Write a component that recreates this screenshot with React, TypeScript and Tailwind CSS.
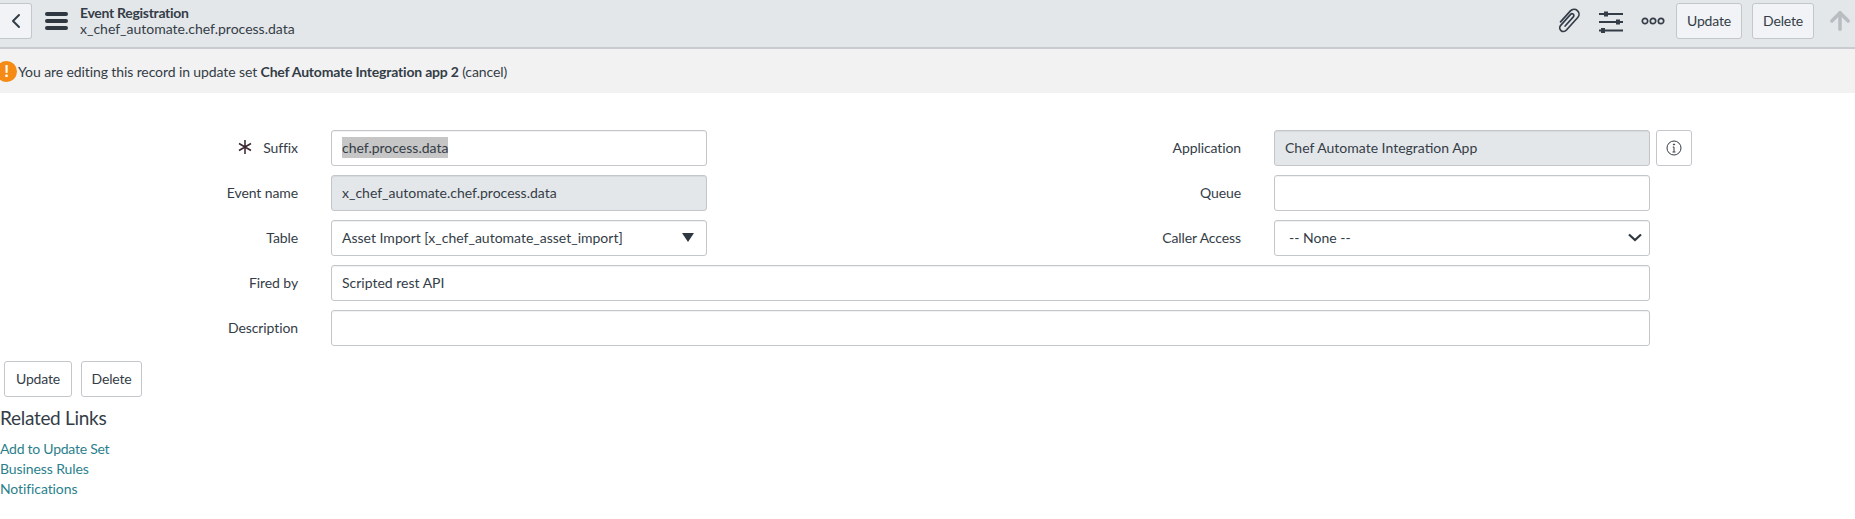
import { ReactNode } from 'react';
import { ArrowUp, ChevronLeft } from 'lucide-react';

const inputBase =
  'flex h-9 items-center rounded-[3px] border border-[#c4c7ca] px-[10px] pb-[2px] text-[14px] tracking-normal text-[#343d47] shadow-[inset_0_1px_1px_rgba(0,0,0,0.06)]';

function Field({ label, required, children }: { label: string; required?: boolean; children: ReactNode }) {
  return (
    <>
      <div className="flex h-9 items-center justify-end gap-[10px] pb-[2px] text-[14px] tracking-[-0.1px] text-[#343d47]">
        {required && (
          <svg width="16" height="16" viewBox="0 0 16 16" stroke="#3a2630" strokeWidth="1.5">
            <path d="M8 1v14M2 4.5l12 7M14 4.5l-12 7" />
          </svg>
        )}
        <span>{label}</span>
      </div>
      {children}
    </>
  );
}

function Btn({ children, className }: { children: ReactNode; className: string }) {
  return (
    <button className={`flex h-9 items-center justify-center rounded-[3px] border border-[#c4c7ca] pb-[1px] text-[14px] tracking-[-0.2px] text-[#343d47] ${className}`}>
      {children}
    </button>
  );
}

export default function App() {
  return (
    <div className="h-[519px] w-[1855px] overflow-hidden bg-white font-['Lato',sans-serif]">
      <header className="flex h-[49px] items-center border-b-2 border-[#c9cbce] bg-[#e4e7ea] pb-[5px]">
        <button className="flex h-[36px] w-[32px] items-center justify-center rounded-r-[3px] border border-l-0 border-[#c4c7ca] bg-[#f1f3f6] text-[#343d47]">
          <ChevronLeft size={24} strokeWidth={2} />
        </button>
        <div className="ml-[13px] flex w-[23px] flex-col gap-[3px]">
          <span className="h-[4px] rounded-sm bg-[#2f3740]" />
          <span className="h-[4px] rounded-sm bg-[#2f3740]" />
          <span className="h-[4px] rounded-sm bg-[#2f3740]" />
        </div>
        <div className="ml-[12px] text-[14px] leading-[16px] text-[#343d47]">
          <div className="font-bold tracking-[-0.3px]">Event Registration</div>
          <div>x_chef_automate.chef.process.data</div>
        </div>
        <div className="ml-auto flex items-center">
          <svg width="32" height="32" viewBox="0 0 26 26" fill="none" stroke="#343d47" strokeWidth="1.4" strokeLinecap="round">
            <path transform="rotate(42 12 13)" d="M7.5 18V6a4 4 0 0 1 8 0V20a3 3 0 0 1-6 0V8a1.5 1.5 0 0 1 3 0V18" />
          </svg>
          <svg className="ml-[13px]" width="24" height="24" viewBox="0 0 24 24" stroke="#343d47" fill="#343d47">
            <path d="M0 5h24M0 13h24M0 21.5h24" strokeWidth="1.8" />
            <rect x="5" y="2.5" width="4" height="5" stroke="none" />
            <rect x="17" y="10.5" width="4" height="5" stroke="none" />
            <rect x="2" y="19" width="4" height="5" stroke="none" />
          </svg>
          <svg className="ml-[18px]" width="24" height="8" viewBox="0 0 24 8" fill="none" stroke="#343d47" strokeWidth="1.7">
            <circle cx="4" cy="4" r="2.7" />
            <circle cx="12" cy="4" r="2.7" />
            <circle cx="20" cy="4" r="2.7" />
          </svg>
          <Btn className="ml-[11px] w-[66px] bg-[#f1f3f6]">Update</Btn>
          <Btn className="ml-[10px] w-[62px] bg-[#f1f3f6]">Delete</Btn>
          <ArrowUp className="ml-[12px] mr-[1px] text-[#b9bcc0]" size={28} strokeWidth={3} />
        </div>
      </header>

      <div className="flex h-[44px] items-center bg-[#f2f2f2] text-[14px] tracking-[-0.1px] text-[#343d47]">
        <span className="ml-[-4px] flex h-[21px] w-[21px] items-center justify-center rounded-full bg-[#f58a14] text-[17px] font-bold text-white">
          !
        </span>
        <span className="ml-[1px]">
          You are editing this record in update set <b className="font-bold tracking-[-0.2px]">Chef Automate Integration app 2</b> (cancel)
        </span>
      </div>

      <form className="mt-[37px] grid grid-cols-[298px_409px_534px_409px_43px] gap-y-[9px]">
        <Field label="Suffix" required>
          <div className={`${inputBase} ml-[33px]`}>
            <span className="bg-[#c6c6c6]">chef.process.data</span>
          </div>
        </Field>
        <Field label="Application">
          <div className={`${inputBase} ml-[33px] bg-[#e4e7ea]`}>Chef Automate Integration App</div>
        </Field>
        <button
          type="button"
          className="ml-[6px] flex h-9 w-[36px] items-center justify-center rounded-[3px] border border-[#c4c7ca] text-[#343d47]"
        >
          <svg width="16" height="16" viewBox="0 0 16 16" fill="none" stroke="currentColor">
            <circle cx="8" cy="8" r="7" />
            <path d="M8 7v5M6.5 12h3M6.8 7H8" />
            <circle cx="8" cy="4.5" r="0.6" fill="currentColor" />
          </svg>
        </button>

        <Field label="Event name">
          <div className={`${inputBase} ml-[33px] bg-[#e4e7ea]`}>x_chef_automate.chef.process.data</div>
        </Field>
        <Field label="Queue">
          <div className={`${inputBase} ml-[33px]`} />
        </Field>
        <div />

        <Field label="Table">
          <div className={`${inputBase} ml-[33px] justify-between`}>
            <span>Asset Import [x_chef_automate_asset_import]</span>
            <span className="mr-[2px] h-0 w-0 border-x-[6px] border-t-[9px] border-x-transparent border-t-[#2f3740]" />
          </div>
        </Field>
        <Field label="Caller Access">
          <div className={`${inputBase} ml-[33px] justify-between pl-[14px] pr-[7px]`}>
            <span>-- None --</span>
            <svg width="14" height="9" viewBox="0 0 14 9" fill="none" stroke="#2f3740" strokeWidth="2.2">
              <path d="M1 1.5l6 5.5 6-5.5" />
            </svg>
          </div>
        </Field>
        <div />

        <Field label="Fired by">
          <div className={`${inputBase} col-span-3 ml-[33px] w-[1319px]`}>Scripted rest API</div>
        </Field>
        <div />

        <Field label="Description">
          <div className={`${inputBase} col-span-3 ml-[33px] w-[1319px]`} />
        </Field>
        <div />
      </form>

      <div className="ml-[4px] mt-[15px] flex gap-[9px]">
        <Btn className="w-[68px] bg-white">Update</Btn>
        <Btn className="w-[61px] bg-white">Delete</Btn>
      </div>

      <h2 className="mt-[9px] text-[19px] leading-[24px] tracking-[-0.3px] text-[#343d47]">Related Links</h2>
      <ul className="mt-[9px] text-[14px] leading-[20px] tracking-[-0.1px] text-[#2b7f8c]">
        <li className="tracking-[-0.25px]">Add to Update Set</li>
        <li>Business Rules</li>
        <li>Notifications</li>
      </ul>
    </div>
  );
}
